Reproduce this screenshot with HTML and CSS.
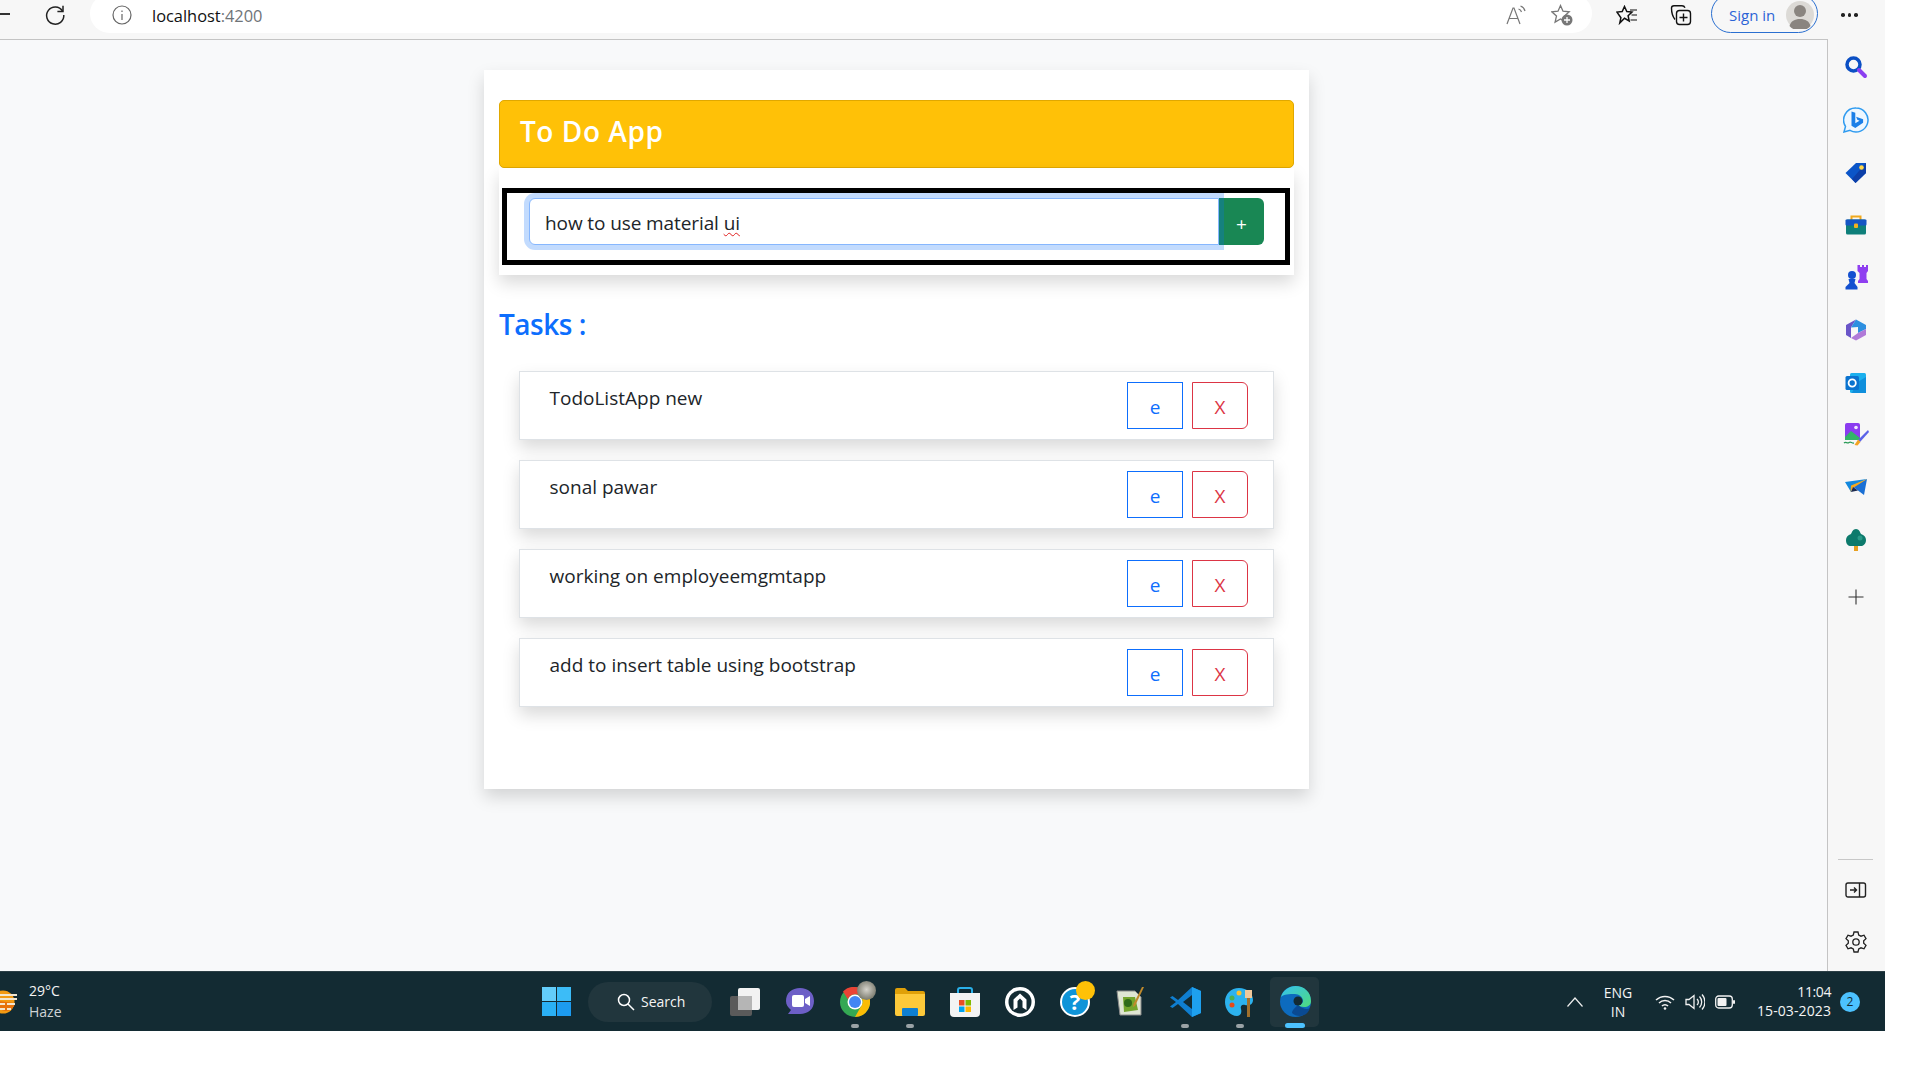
FILE: index.html
```html
<!DOCTYPE html>
<html lang="en">
<head>
<meta charset="utf-8">
<title>To Do App</title>
<link rel="stylesheet" href="styles.css">
</head>
<body>
<div class="window">
  <header class="toolbar">
    <span class="minimise"></span>
    <svg class="reload" width="22" height="22" viewBox="0 0 22 22" fill="none" stroke="#222" stroke-width="1.5"><path d="M18.5 7A8.6 8.6 0 1 0 19.8 11"/><path d="M19 1.8V7.4H13.4"/></svg>
    <div class="address">
      <svg width="20" height="20" viewBox="0 0 20 20" fill="none" stroke="#666" stroke-width="1.2"><circle cx="10" cy="10" r="9"/><path d="M10 9v6M10 5.500v1.400"/></svg>
      <span class="url">localhost<span class="port">:4200</span></span>
      <span class="address-tools">
        <svg width="20" height="20" viewBox="0 0 20 20" fill="none" stroke="#777" stroke-width="1.200"><path d="M1 19 7 3h1l6 16M3.200 13.500h9"/><path d="M12.500 4a4 4 0 0 1 3 3M14.500 1a7 7 0 0 1 4.500 5"/></svg>
        <svg width="22" height="22" viewBox="0 0 22 22" fill="none" stroke="#777" stroke-width="1.300"><path d="M9.500 1.500l2.500 5.700 6.200.6-4.700 4.200 1.400 6.100-5.400-3.200-5.400 3.200 1.400-6.100L.8 7.800 7 7.200z"/><circle cx="16" cy="16" r="5.500" fill="#777" stroke="none"/><path d="M16 13v6M13 16h6" stroke="#fff"/></svg>
      </span>
    </div>
    <svg class="tool-fav" width="22" height="20" viewBox="0 0 22 20" fill="none" stroke="#111" stroke-width="1.500"><path d="M8.500 1.500l2.300 5 5.200.6-3.900 3.600 1.100 5.300-4.700-2.700L3.800 18l1.100-5.300L1 7.100l5.200-.6z"/><path d="M14 5h7M15.500 10h5.500M14.500 15h6.500" stroke-width="1.200"/></svg>
    <svg class="tool-coll" width="22" height="22" viewBox="0 0 22 22" fill="none" stroke="#111" stroke-width="1.400"><path d="M5 15.500C3 13 1.500 8 1.500 4c0-1.500 1-2.300 2.500-2.300h8c1.500 0 2.500.8 3 2"/><rect x="6.500" y="6.500" width="14" height="14" rx="3"/><path d="M13.500 9.500v8M9.500 13.500h8"/></svg>
    <div class="signin">
      <span>Sign in</span>
      <span class="avatar"><svg width="28" height="28" viewBox="0 0 28 28"><circle cx="14" cy="14" r="14" fill="#dcdad6"/><circle cx="14" cy="10" r="6" fill="#8a8580"/><path d="M3.500 25c1.500-5 5-7 10.500-7s9 2 10.500 7a14 14 0 0 1-21 0z" fill="#8a8580"/></svg></span>
    </div>
    <span class="more"><i></i><i></i><i></i></span>
  </header>

  <div class="middle">
    <main class="content">
      <section class="card">
        <h1 class="banner">To Do App</h1>
        <div class="form-panel">
          <div class="form-box">
            <div class="input-row">
              <div class="task-input">how to use material <span class="misspelt">ui</span></div>
              <button class="add-btn">+</button>
            </div>
          </div>
        </div>
        <h2 class="tasks-title">Tasks :</h2>
        <ul class="task-list">
          <li class="task"><span class="task-text">TodoListApp new</span><button class="btn-edit">e</button><button class="btn-del">X</button></li>
          <li class="task"><span class="task-text">sonal pawar</span><button class="btn-edit">e</button><button class="btn-del">X</button></li>
          <li class="task"><span class="task-text">working on employeemgmtapp</span><button class="btn-edit">e</button><button class="btn-del">X</button></li>
          <li class="task"><span class="task-text">add to insert table using bootstrap</span><button class="btn-edit">e</button><button class="btn-del">X</button></li>
        </ul>
      </section>
    </main>

    <aside class="sidebar">
      <span class="side-icon"><svg width="24" height="24" viewBox="0 0 24 24" fill="none"><circle cx="9.500" cy="9.500" r="6.500" stroke="#0b4fc4" stroke-width="3.500"/><path d="M15 15l6 6" stroke="#8b3ff0" stroke-width="4" stroke-linecap="round"/></svg></span>
      <span class="side-icon"><svg width="26" height="26" viewBox="0 0 26 26" fill="none"><path d="M13 1a12 12 0 1 1-6 22.400L1 25l1.500-5.600A12 12 0 0 1 13 1z" fill="#eef7ff" stroke="#2f9bf0" stroke-width="1.500"/><path d="M8.500 4.500l3.800 1.300v10.500l4.200-2.500-2.200-1-1.200-3 7 2.500v3.400L12.300 21l-3.800-2.200z" fill="#1b7fe8"/></svg></span>
      <span class="side-icon"><svg width="24" height="24" viewBox="0 0 24 24"><path d="M1.500 13 12 3h10v10L11.500 23z" fill="#0b55c8"/><path d="M22 3v10L11.500 23 8 19z" fill="#0d3fa8"/><circle cx="17.500" cy="7.500" r="2.300" fill="#ffd84a"/></svg></span>
      <span class="side-icon"><svg width="24" height="24" viewBox="0 0 24 24"><path d="M7.500 7V3.500h9V7" fill="none" stroke="#f0a91e" stroke-width="2"/><rect x="2" y="6.500" width="20" height="15" rx="1.500" fill="#0e7f7a"/><rect x="1.500" y="6.500" width="21" height="6" rx="1" fill="#1555c4"/><rect x="10" y="10.500" width="4" height="4.500" rx="1" fill="#f4b120"/></svg></span>
      <span class="side-icon"><svg width="24" height="26" viewBox="0 0 24 26"><path d="M13.500 1h2.500v2h2V1h2v2h2V1h2v6l-1.500 2v6l1.500 2v2h-10v-2l1.500-2V9L13.500 7z" fill="#8f3ff0"/><circle cx="8" cy="11" r="4" fill="#1450d0"/><path d="M4.500 15h7l-1 4 3 4v2.500H1.500V23l4-4z" fill="#1450d0"/></svg></span>
      <span class="side-icon"><svg width="24" height="24" viewBox="0 0 24 24"><path d="M12 1.500 2 7v10l5 3V9.500z" fill="#6a55c8"/><path d="M12 1.500 22 7v4l-8 4V9L7 9.500z" fill="#2d8fe0"/><path d="M22 11v6l-10 5.500L7 20l7-5z" fill="#b07ad8"/></svg></span>
      <span class="side-icon"><svg width="24" height="24" viewBox="0 0 24 24"><rect x="6" y="2" width="16" height="20" rx="1.500" fill="#1bb0ee"/><path d="M12 12l10-6v16H8z" fill="#0f8fdc"/><rect x="1.500" y="5" width="13.500" height="14" rx="1.500" fill="#0a73cf"/><circle cx="8.200" cy="12" r="3.600" fill="none" stroke="#fff" stroke-width="1.800"/></svg></span>
      <span class="side-icon"><svg width="26" height="26" viewBox="0 0 26 26"><rect x="2" y="1" width="15" height="17" rx="2" fill="#8b3cf0"/><circle cx="13" cy="5.500" r="1.800" fill="#f2e8ff"/><path d="M2 15l6-6 9 7v2H2z" fill="#33b468"/><path d="M25 8 15 18l2 2L26 10z" fill="#5a62e8"/><path d="M15 17.500l2.500 2.500-3 3.500-3-.5z" fill="#f3a422"/><path d="M1 21c2-2 3 1 5-.5s2.500 1 5 .5" fill="none" stroke="#2c9c58" stroke-width="1.300"/></svg></span>
      <span class="side-icon"><svg width="24" height="20" viewBox="0 0 24 20"><path d="M1 4 23 1 8 8l-1 6z" fill="#1288de"/><path d="M23 1 8 8l12 9z" fill="#1a6fd4"/><path d="M7 7.500 23 1 9 10 6.500 14z" fill="#f5a81c"/><path d="M7 14l2-5 5 3.500z" fill="#1c2a50"/></svg></span>
      <span class="side-icon"><svg width="22" height="24" viewBox="0 0 22 24"><rect x="9" y="16" width="4" height="7" fill="#e8a020"/><path d="M11 1c3 0 4 3 5 5 3 1 5 3 5 6 0 4-3 6-5 6H6c-3 0-5-2-5-6 0-3 2-5 5-6 1-2 2-5 5-5z" fill="#0d7a6c"/><circle cx="15" cy="10" r="2.500" fill="#2a9a88"/></svg></span>
      <span class="side-icon side-plus"><svg width="18" height="18" viewBox="0 0 18 18" stroke="#333" stroke-width="1.100"><path d="M9 1.500v15M1.500 9h15"/></svg></span>
      <span class="side-rule"></span>
      <span class="side-icon"><svg width="22" height="18" viewBox="0 0 22 18" fill="none" stroke="#222" stroke-width="1.400"><rect x="1" y="2" width="19.500" height="14" rx="2"/><path d="M14.500 2v14"/><path d="M5 9h6.500M9 6.500 11.500 9 9 11.500"/></svg></span>
      <span class="side-icon side-gear"><svg width="24" height="24" viewBox="0 0 24 24" fill="none" stroke="#222" stroke-width="1.300"><circle cx="12" cy="12" r="3.200"/><path d="M10 2h4l.7 3 2.300 1.200 3-1 2 3.500-2.300 2v2.600l2.300 2-2 3.500-3-1-2.300 1.200-.7 3h-4l-.7-3L7 17.800l-3 1-2-3.500 2.300-2v-2.600L2 8.700l2-3.500 3 1 2.300-1.200z"/></svg></span>
    </aside>
  </div>

  <footer class="taskbar">
    <div class="weather">
      <svg class="weather-icon" width="22" height="26" viewBox="0 0 22 26"><circle cx="6" cy="13" r="11.500" fill="#f39a12"/><path d="M0 12a9 9 0 0 0 18 2z" fill="#e8720c"/><path d="M0 6h20M0 10h20M0 15h8M10 15h8M3 20h5M10 20h4" stroke="#f3e6cf" stroke-width="2"/></svg>
      <div class="weather-text"><span>29°C</span><span class="haze">Haze</span></div>
    </div>
    <svg class="start" width="29" height="29" viewBox="0 0 29 29"><rect width="14" height="14" fill="#63cdfa"/><rect x="15" width="14" height="14" fill="#3cbcf7"/><rect y="15" width="14" height="14" fill="#2ab0f5"/><rect x="15" y="15" width="14" height="14" fill="#1c9bf0"/></svg>
    <div class="search-pill">
      <svg width="18" height="18" viewBox="0 0 18 18" fill="none" stroke="#fff" stroke-width="1.500"><circle cx="7" cy="7" r="5.500"/><path d="M11 11l6 6"/></svg>
      <span>Search</span>
    </div>
    <div class="apps">
      <span class="app"><svg width="30" height="30" viewBox="0 0 30 30"><rect x="0" y="9" width="22" height="20" rx="2" fill="#5a5a5a"/><rect x="8" y="1" width="22" height="22" rx="2" fill="#f2f2f2"/><rect x="8" y="9" width="14" height="14" fill="#b5b5b5"/></svg></span>
      <span class="app"><svg width="30" height="30" viewBox="0 0 30 30"><path d="M15 1c8 0 14 5 14 13s-6 13-14 13H3l3-4C3 20 1 18 1 14 1 6 7 1 15 1z" fill="#6d5fc7"/><rect x="7" y="8" width="12" height="12" rx="2" fill="#fff"/><path d="M20 12l5-3v10l-5-3z" fill="#fff"/></svg></span>
      <span class="app app-dot"><svg width="30" height="30" viewBox="0 0 30 30"><circle cx="15" cy="15" r="15" fill="#34a853"/><path d="M15 0a15 15 0 0 1 13 7.500H15a7.500 7.500 0 0 0-7 5L3 4.500A15 15 0 0 1 15 0z" fill="#ea4335"/><path d="M28 7.500A15 15 0 0 1 15 30l6.500-11.500A7.500 7.500 0 0 0 20 9z" fill="#fbbc05"/><circle cx="15" cy="15" r="7.500" fill="#fff"/><circle cx="15" cy="15" r="6" fill="#4285f4"/></svg><i class="thumb"></i></span>
      <span class="app app-dot"><svg width="30" height="28" viewBox="0 0 30 28"><path d="M0 2a2 2 0 0 1 2-2h8l3 3h15a2 2 0 0 1 2 2v4H0z" fill="#e0a008"/><path d="M0 6h30v20a2 2 0 0 1-2 2H2a2 2 0 0 1-2-2z" fill="#fdc93a"/><rect x="7" y="20" width="16" height="8" rx="1" fill="#0f7fd0"/></svg></span>
      <span class="app"><svg width="30" height="30" viewBox="0 0 30 30"><path d="M8 7V3a2 2 0 0 1 2-2h10a2 2 0 0 1 2 2v4" fill="none" stroke="#2ab0ea" stroke-width="2"/><path d="M0 6h30v20a4 4 0 0 1-4 4H4a4 4 0 0 1-4-4z" fill="#f3f3f3"/><rect x="9" y="13" width="5.500" height="5.500" fill="#ea4e23"/><rect x="15.500" y="13" width="5.500" height="5.500" fill="#7fba00"/><rect x="9" y="19.500" width="5.500" height="5.500" fill="#00a4ef"/><rect x="15.500" y="19.500" width="5.500" height="5.500" fill="#ffb900"/></svg></span>
      <span class="app"><svg width="30" height="30" viewBox="0 0 30 30"><circle cx="15" cy="15" r="15" fill="#fff"/><circle cx="15" cy="15" r="11.500" fill="#132b33"/><path d="M8.500 23V12.500L15 6.500l6.500 6V23l-4-2.500V14L15 11.500 12.500 14v6.500z" fill="#fff"/></svg></span>
      <span class="app"><svg width="30" height="30" viewBox="0 0 30 30"><circle cx="15" cy="15" r="14" fill="#0f94d8" stroke="#fff" stroke-width="2"/><text class="help-mark" x="15" y="23" text-anchor="middle">?</text></svg><i class="help-dot"></i></span>
      <span class="app"><svg width="30" height="30" viewBox="0 0 30 30"><path d="M2 4h18l6 6v18H5z" fill="#dfe6d3" stroke="#8a8a8a"/><path d="M8 10h12l3 13-14 2z" fill="#74a52d"/><circle cx="13" cy="16" r="4" fill="#2f6b1a"/><path d="M29 0 20 19l-2 1 .500-3L27 0z" fill="#c08a2c"/></svg></span>
      <span class="app app-dot"><svg width="31" height="30" viewBox="0 0 31 30"><path d="M22 0 31 4v22l-9 4L8 17l-5.500 4L0 19.500 6 15 0 10.500 2.500 9 8 13z" fill="#0f7ed0"/><path d="M22 0 31 4v22l-9 4z" fill="#1ea0ee"/><path d="M22 8 13 15l9 7z" fill="#132b33"/></svg></span>
      <span class="app app-dot"><svg width="30" height="30" viewBox="0 0 30 30"><path d="M14 1c8 0 14 5 14 12 0 5-5 6-8 5s-5 1-4 4 0 7-4 7C5 29 0 22 0 15 0 7 6 1 14 1z" fill="#2cb2ee"/><circle cx="7" cy="11" r="2.500" fill="#4caf50"/><circle cx="14" cy="6" r="2.500" fill="#fbc02d"/><circle cx="7" cy="18" r="2.500" fill="#e64a19"/><rect x="22" y="11" width="3" height="19" fill="#a0702c"/><path d="M20 3h7v8h-7z" fill="#f0c89a"/></svg></span>
      <span class="app app-active"><svg width="31" height="31" viewBox="0 0 31 31"><defs><linearGradient id="edge" x1="0" y1="0" x2="1" y2="1"><stop offset="0" stop-color="#35c1f1"/><stop offset="1" stop-color="#4fdc7c"/></linearGradient></defs><circle cx="15.500" cy="15.500" r="15.500" fill="#0d6bbe"/><path d="M1 11C3 4 9 0 15.500 0 24 0 31 6 31 15c0 4-3 6-7 6-3 0-5-1-6-2 3 0 5-2 5-4 0-4-4-7-8-7-6 0-11 0-14 3z" fill="url(#edge)"/><path d="M18 19c-3 3-6 5-6 8 3 3 8 4 12 2 3-1 5-4 6-7-3 2-7 1-12-3z" fill="#0a4a92"/><circle cx="18" cy="15" r="4.500" fill="#132b33"/></svg></span>
    </div>
    <div class="tray">
      <svg class="tray-chevron" width="16" height="10" viewBox="0 0 16 10" fill="none" stroke="#eee" stroke-width="1.200"><path d="M.5 9.500 8 1l7.500 8.500"/></svg>
      <div class="lang"><span>ENG</span><span>IN</span></div>
      <svg class="tray-wifi" width="20" height="16" viewBox="0 0 20 16" fill="none" stroke="#f2f2f2" stroke-width="1.500"><path d="M1 6a13 13 0 0 1 18 0M4 9a8.500 8.500 0 0 1 12 0M7 12a4 4 0 0 1 6 0"/><circle cx="10" cy="14.500" r="1.300" fill="#f2f2f2" stroke="none"/></svg>
      <svg class="tray-sound" width="20" height="18" viewBox="0 0 20 18" fill="none" stroke="#f2f2f2" stroke-width="1.300"><path d="M1 6.500h3L9 2.500v13l-5-4H1z"/><path d="M12 6a4 4 0 0 1 0 6M14.500 3.500a8 8 0 0 1 0 11M17 1.500a11 11 0 0 1 0 15"/></svg>
      <svg class="tray-battery" width="20" height="14" viewBox="0 0 20 14"><rect x=".7" y="1" width="16.600" height="12" rx="3" fill="none" stroke="#f2f2f2" stroke-width="1.300"/><rect x="2.500" y="3" width="9" height="8" rx="1" fill="#f2f2f2"/><rect x="18" y="5" width="2" height="4" rx="1" fill="#f2f2f2"/></svg>
      <div class="clock"><span class="clock-time">11:04</span><span class="clock-date">15-03-2023</span></div>
      <span class="notif">2</span>
    </div>
  </footer>
</div>
</body>
</html>
```
FILE: styles.css
```css
* { box-sizing: border-box; }
html, body { margin: 0; padding: 0; background: #fff; }
body { width: 1920px; height: 1080px; overflow: hidden; font-family: "Open Sans", "Noto Sans", sans-serif; color: #212529; }
button { font-family: inherit; }

.window { width: 1885px; display: flex; flex-direction: column; }

/* browser toolbar */
.toolbar { height: 39px; background: #f7f7f7; display: flex; align-items: flex-start; overflow: hidden; }
.minimise { width: 10px; height: 1.500px; background: #333; margin-top: 13px; }
.reload { margin-left: 34px; flex: none; margin-top: 4px; }
.address { margin-left: 24px; margin-top: -6px; width: 1502px; height: 39px; background: #fff; border-radius: 20px; display: flex; align-items: center; padding: 6px 19px 3px 22px; flex: none; }
.url { margin-left: 20px; font-size: 16.400px; color: #111; }
.port { color: #6f7478; }
.address-tools { margin-left: auto; display: flex; align-items: center; gap: 25px; }
.tool-fav { margin-left: 24px; flex: none; margin-top: 5px; }
.tool-coll { margin-left: 32px; flex: none; margin-top: 4px; }
.signin { margin-left: 19px; margin-top: -6px; width: 107px; height: 39px; padding: 6px 3px 3px 17px; border: 1.500px solid #2a6fd0; border-radius: 20px; display: flex; align-items: center; justify-content: space-between; font-size: 15px; color: #2b63d6; flex: none; }
.avatar { display: flex; width: 28px; height: 28px; }
.more { margin-left: 23px; display: flex; gap: 3px; margin-top: 13px; }
.more i { width: 3.500px; height: 3.500px; border-radius: 50%; background: #222; }

.middle { display: flex; height: 932px; }
.content { width: 1828px; background: #f8f9fa; border-top: 1px solid #c4c4c4; border-right: 1.500px solid #c4c4c4; padding: 30px 0 0 484px; }

/* app card */
.card { width: 825px; height: 719px; background: #fff; padding: 30px 15px 0; box-shadow: 0 8px 16px rgba(0,0,0,.15); }
.banner { margin: 0; height: 68px; background: #ffc107; border: 1px solid #e0a800; border-radius: 5px; color: #fff; font-size: 28px; font-weight: 600; line-height: 60px; padding-left: 20px; letter-spacing: .55px; }
.form-panel { height: 107px; padding: 20px 4px 10px 3px; box-shadow: 0 8px 16px rgba(0,0,0,.15); background: #fff; }
.form-box { height: 77px; border: 5px solid #000; padding: 5px 21px 15px 22px; }
.input-row { display: flex; height: 47px; }
.task-input { flex: 1; position: relative; z-index: 1; border: 1px solid #86b7fe; border-radius: 6px 0 0 6px; background: #fff; box-shadow: 0 0 0 5px rgba(13,110,253,.25); font-size: 19px; line-height: 49px; padding-left: 15px; color: #212529; letter-spacing: -.1px; }
.misspelt { text-decoration: underline wavy #e02020 1px; text-underline-offset: 2px; }
.add-btn { width: 45px; height: 47px; background: #198754; border: 0; border-radius: 0 6px 6px 0; color: #fff; font-size: 19px; padding: 4px 0 0; }
.tasks-title { margin: 28px 0 0; height: 42px; color: #0d6efd; font-size: 28px; font-weight: 600; line-height: 42px; letter-spacing: -.5px; }

.task-list { list-style: none; margin: 26px 0 0 20px; padding: 0; width: 755px; display: flex; flex-direction: column; gap: 20px; }
.task { height: 69px; background: #fff; border: 1px solid #dee2e6; box-shadow: 0 8px 16px rgba(0,0,0,.15); display: flex; align-items: flex-start; padding: 10px 25px 0 29.500px; gap: 9px; }
.task-text { flex: 1; font-size: 19px; line-height: 26px; margin-top: 3px; }
.btn-edit, .btn-del { width: 56px; height: 47px; background: #fff; font-size: 19px; padding: 2px 0 0; }
.btn-edit { border: 1.500px solid #0d6efd; color: #0d6efd; border-radius: 0; }
.btn-del { border: 1.500px solid #dc3545; color: #dc3545; border-radius: 0 6px 6px 0; }

/* edge sidebar */
.sidebar { width: 57px; background: #f7f7f7; display: flex; flex-direction: column; align-items: center; padding: 15px 2px 16px 0; gap: 26.600px; }
.side-icon { height: 26px; display: flex; align-items: center; justify-content: center; }
.side-plus { margin-top: 4px; }
.side-rule { margin-top: auto; width: 35px; height: 1px; background: #c8c8c8; margin-bottom: -9px; }
.side-gear { margin-top: -1px; }

/* taskbar */
.taskbar { height: 60px; background: #132b33; border-top: 1px solid #2c3f46; display: flex; align-items: center; color: #f5f5f5; font-size: 14px; }
.weather { width: 542px; display: flex; align-items: center; overflow: hidden; margin-left: -3px; flex: none; }
.weather-icon { flex: none; }
.weather-text { margin-left: 10px; display: flex; flex-direction: column; font-size: 14px; line-height: 21px; margin-top: -1px; }
.haze { color: #cfd4d6; }
.start { flex: none; margin-left: 3px; }
.search-pill { margin-left: 17px; width: 124px; height: 40px; border-radius: 20px; background: #21363d; display: flex; align-items: center; padding-left: 29px; gap: 6px; font-size: 14px; flex: none; }
.apps { margin-left: 18px; display: flex; gap: 25px; align-items: center; }
.app { position: relative; width: 30px; height: 30px; display: flex; align-items: center; justify-content: center; }
.app svg { flex: none; position: relative; }
.app-dot::after { content: ""; position: absolute; left: 11px; top: 37px; width: 8px; height: 4px; border-radius: 2px; background: #9aa2a6; }
.thumb { position: absolute; left: 17px; top: -6px; width: 19px; height: 19px; border-radius: 50%; background: radial-gradient(circle at 50% 45%, #d6d4cc, #7e7e72 70%); }
.help-dot { position: absolute; left: 16px; top: -6px; width: 19px; height: 19px; border-radius: 50%; background: #ffc107; }
.help-mark { font-size: 22px; font-weight: 700; fill: #fff; font-family: "Open Sans", sans-serif; }
.app-active::before { content: ""; position: absolute; left: -10px; top: -10px; width: 49px; height: 50px; border-radius: 5px; background: #21363d; }
.app-active::after { content: ""; position: absolute; left: 5px; top: 36px; width: 20px; height: 5px; border-radius: 3px; background: #4cc2ff; }
.tray { margin-left: auto; display: flex; align-items: center; padding-right: 25px; }
.tray-chevron { flex: none; }
.lang { width: 50px; margin-left: 10px; display: flex; flex-direction: column; align-items: center; line-height: 19px; font-size: 14px; }
.tray-wifi { margin-left: 12px; flex: none; }
.tray-sound { margin-left: 10px; flex: none; }
.tray-battery { margin-left: 10px; flex: none; }
.clock { margin-left: 14px; width: 82px; margin-top: -2px; display: flex; flex-direction: column; align-items: flex-end; line-height: 19px; white-space: nowrap; }
.clock-time { font-size: 14px; letter-spacing: -.4px; }
.clock-date { font-size: 14px; letter-spacing: .1px; }
.notif { margin-left: 9px; width: 20px; height: 20px; border-radius: 50%; background: #4cc2ff; color: #132b33; font-size: 12px; display: flex; align-items: center; justify-content: center; }
```
